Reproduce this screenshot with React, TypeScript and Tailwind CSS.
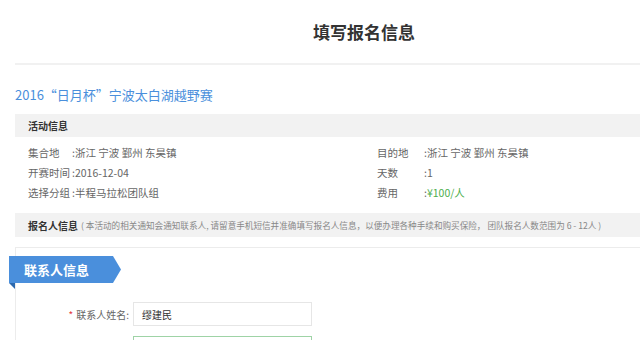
import React from 'react';

const infoLeft = [
  { label: '集合地', value: '浙江 宁波 鄞州 东昊镇' },
  { label: '开赛时间', value: '2016-12-04' },
  { label: '选择分组', value: '半程马拉松团队组' },
];

const infoRight = [
  { label: '目的地', value: '浙江 宁波 鄞州 东昊镇', green: false },
  { label: '天数', value: '1', green: false },
  { label: '费用', value: '¥100/人', green: true },
];

const App: React.FC = () => {
  return (
    <div
      className="w-[640px] h-[340px] overflow-hidden bg-white text-[#666]"
      style={{ fontFamily: '"Noto Sans CJK SC", "Noto Sans", "Liberation Sans", sans-serif' }}
    >
      {/* Page header */}
      <div className="h-[63px] pl-[88px] flex items-center justify-center">
        <h1 className="text-[17px] font-bold text-[#333] leading-none">填写报名信息</h1>
      </div>
      <div className="ml-[15px] h-[2px] bg-[#f1f1f1]"></div>

      {/* Event title */}
      <div className="ml-[15px] mt-[21px] h-[18px] flex items-center text-[13px] text-[#4a8fdc]">
        2016“日月杯”宁波太白湖越野赛
      </div>

      {/* Activity info */}
      <div className="ml-[15px] mt-[10px] h-[23px] bg-[#f2f2f2] flex items-center pl-[13px] text-[10px] font-bold text-[#333]">
        活动信息
      </div>
      <div className="ml-[15px] pl-[13px] pt-[6px] flex text-[10.5px]">
        <div className="w-[349px] flex flex-col">
          {infoLeft.map((row) => (
            <div key={row.label} className="h-[20px] flex items-center">
              <span className="w-[44px]">{row.label}</span>
              <span>:{row.value}</span>
            </div>
          ))}
        </div>
        <div className="flex flex-col">
          {infoRight.map((row) => (
            <div key={row.label} className="h-[20px] flex items-center">
              <span className="w-[47px]">{row.label}</span>
              <span>
                :<span className={row.green ? 'text-[#4cae4c]' : ''}>{row.value}</span>
              </span>
            </div>
          ))}
        </div>
      </div>

      {/* Registrant notice */}
      <div className="ml-[15px] mt-[10px] h-[24px] bg-[#f2f2f2] flex items-center pl-[13px] whitespace-nowrap">
        <span className="text-[10px] font-bold text-[#333]">报名人信息</span>
        <span className="text-[8.6px] text-[#888] ml-[3px]">
          ( 本活动的相关通知会通知联系人, 请留意手机短信并准确填写报名人信息，以便办理各种手续和购买保险， 团队报名人数范围为 6 - 12人 )
        </span>
      </div>

      {/* Contact form box */}
      <div className="ml-[15px] mt-[10px] border-t border-l border-[#ececec] pt-[8px]">
        <div className="-ml-[7px] flex flex-col items-start">
          <div className="w-[112px] h-[27px] bg-[#4a8fdc] flex items-center pl-[15px] text-[13px] font-bold text-white [clip-path:polygon(0_0,104px_0,112px_50%,104px_100%,0_100%)]">
            联系人信息
          </div>
          <div className="w-0 h-0 border-t-[6px] border-l-[6px] border-t-[#2c68ad] border-l-transparent"></div>
        </div>

        <div className="mt-[13px] flex items-center">
          <div className="w-[117px] flex justify-end items-center text-[10px] text-[#666] pr-[4px]">
            <span className="text-[#e4393c] mr-[3px]">*</span>
            联系人姓名:
          </div>
          <div className="w-[179px] h-[24px] border border-[#e6e6e6] flex items-center pl-[8px] text-[10px] text-[#333]">
            缪建民
          </div>
        </div>
        <div className="mt-[10px] flex">
          <div className="w-[117px]"></div>
          <div className="w-[179px] h-[24px] border border-[#9ed3a6]"></div>
        </div>
      </div>
    </div>
  );
};

export default App;
